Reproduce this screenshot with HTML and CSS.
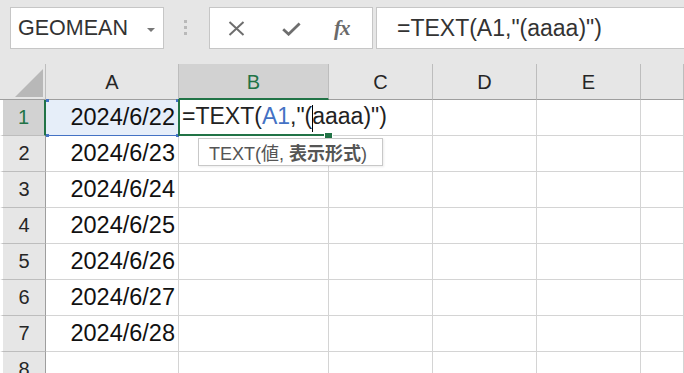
FILE: index.html
```html
<!DOCTYPE html>
<html>
<head lang="ja">
    <meta charset="UTF-8">
    <title>TEXT関数</title>
    <link rel="stylesheet" href="styles.css">
</head>
<body>
<div class="app">
    <div class="toolbar">
        <div class="namebox">
            <span class="name">GEOMEAN</span>
            <span class="drop"></span>
        </div>
        <div class="grip"><i></i><i></i><i></i></div>
        <div class="fbtns">
            <svg class="ic-x" width="17" height="15" viewBox="0 0 17 15">
                <path d="M1.5 1 L15.5 14 M15.5 1 L1.5 14" stroke="#6e6e6e" stroke-width="2" fill="none"/>
            </svg>
            <svg class="ic-ok" width="19" height="14" viewBox="0 0 19 14">
                <path d="M1.2 7.2 L6.6 12.2 L17.6 1.4" stroke="#6e6e6e" stroke-width="2.8" fill="none"/>
            </svg>
            <span class="fx">fx</span>
        </div>
        <div class="formula">=TEXT(A1,"(aaaa)")</div>
    </div>

    <div class="sheet">
        <div class="corner"><span class="tri"></span></div>
        <div class="colhead">A</div>
        <div class="colhead on">B</div>
        <div class="colhead">C</div>
        <div class="colhead">D</div>
        <div class="colhead">E</div>
        <div class="colhead"></div>

        <div class="rowhead on">1</div>
        <div class="cell date ref">2024/6/22<i class="h h1"></i><i class="h h2"></i><i class="h h3"></i><i class="h h4"></i></div>
        <div class="cell edit"><span class="etext">=TEXT(<span class="ref-a">A1</span>,"(<span class="caret"></span>aaaa)")</span></div>
        <div class="cell"></div><div class="cell"></div><div class="cell"></div><div class="cell"></div>

        <div class="rowhead">2</div>
        <div class="cell date">2024/6/23</div>
        <div class="cell"></div><div class="cell"></div><div class="cell"></div><div class="cell"></div><div class="cell"></div>

        <div class="rowhead">3</div>
        <div class="cell date">2024/6/24</div>
        <div class="cell"></div><div class="cell"></div><div class="cell"></div><div class="cell"></div><div class="cell"></div>

        <div class="rowhead">4</div>
        <div class="cell date">2024/6/25</div>
        <div class="cell"></div><div class="cell"></div><div class="cell"></div><div class="cell"></div><div class="cell"></div>

        <div class="rowhead">5</div>
        <div class="cell date">2024/6/26</div>
        <div class="cell"></div><div class="cell"></div><div class="cell"></div><div class="cell"></div><div class="cell"></div>

        <div class="rowhead">6</div>
        <div class="cell date">2024/6/27</div>
        <div class="cell"></div><div class="cell"></div><div class="cell"></div><div class="cell"></div><div class="cell"></div>

        <div class="rowhead">7</div>
        <div class="cell date">2024/6/28</div>
        <div class="cell"></div><div class="cell"></div><div class="cell"></div><div class="cell"></div><div class="cell"></div>

        <div class="rowhead">8</div>
        <div class="cell"></div><div class="cell"></div><div class="cell"></div><div class="cell"></div><div class="cell"></div><div class="cell"></div>

        <div class="tip">TEXT(値, <b>表示形式</b>)</div>
    </div>
</div>
</body>
</html>
```

FILE: styles.css
```css
* {
    margin: 0;
    padding: 0;
    box-sizing: border-box;
}

body {
    width: 684px;
    height: 373px;
    overflow: hidden;
    background: #fff;
    font-family: "Liberation Sans", "Noto Sans CJK JP", sans-serif;
    color: #222;
}

.app {
    width: 684px;
}

/* 上部の名前ボックスと数式バー */
.toolbar {
    height: 64px;
    background: #e6e6e6;
    display: flex;
    align-items: flex-start;
    padding-top: 7px;
}

.namebox {
    margin-left: 10px;
    width: 154px;
    height: 42px;
    background: #fff;
    border: 1px solid #c6c6c6;
    display: flex;
    align-items: center;
    padding-left: 7px;
}

.namebox .name {
    font-size: 21.5px;
    color: #333;
    flex: 1;
}

.namebox .drop {
    width: 0;
    height: 0;
    border-left: 4px solid transparent;
    border-right: 4px solid transparent;
    border-top: 4px solid #777;
    margin-right: 8px;
    margin-top: 3px;
}

.grip {
    margin-left: 20px;
    margin-top: 13px;
    display: flex;
    flex-direction: column;
    gap: 3px;
}

.grip i {
    display: block;
    width: 3px;
    height: 3px;
    background: #b9b9b9;
}

.fbtns {
    margin-left: 22px;
    width: 164px;
    height: 42px;
    background: #fff;
    border: 1px solid #c6c6c6;
    display: flex;
    align-items: center;
    padding-left: 18px;
}

.ic-x {
    margin-top: 1px;
}

.ic-ok {
    margin-left: 37px;
    margin-top: 1px;
}

.fx {
    margin-left: 33px;
    font-family: "Liberation Serif", serif;
    font-style: italic;
    font-weight: bold;
    font-size: 21px;
    color: #6a6a6a;
    letter-spacing: -1px;
}

.formula {
    margin-left: 3px;
    flex: 1;
    height: 42px;
    background: #fff;
    border: 1px solid #c6c6c6;
    border-right: none;
    padding-left: 20px;
    font-size: 23px;
    line-height: 40px;
    color: #333;
    white-space: nowrap;
}

/* シート */
.sheet {
    position: relative;
    display: grid;
    grid-template-columns: 46px 133px 150px 104px 104px 104px 1fr;
    grid-auto-rows: 36px;
}

.corner {
    background: #e6e6e6;
    border-right: 1px solid #bdbdbd;
    border-bottom: 1px solid #9e9e9e;
    display: flex;
    align-items: flex-end;
    justify-content: flex-end;
    padding: 0 2px 2px 0;
}

.corner .tri {
    width: 0;
    height: 0;
    border-left: 28px solid transparent;
    border-bottom: 28px solid #b8b8b8;
}

.colhead {
    background: #e6e6e6;
    border-right: 1px solid #bdbdbd;
    border-bottom: 1px solid #9e9e9e;
    display: flex;
    align-items: center;
    justify-content: center;
    font-size: 20px;
    color: #262626;
    padding-top: 1px;
}

.colhead.on {
    background: #d2d2d2;
    color: #217346;
    border-bottom: 2px solid #217346;
    padding-top: 2px;
}

.rowhead {
    background: #e6e6e6;
    border-left: 3px solid #fff;
    border-right: 1px solid #9e9e9e;
    border-bottom: 1px solid #bdbdbd;
    display: flex;
    align-items: center;
    justify-content: center;
    font-size: 20px;
    color: #262626;
}

.rowhead.on {
    background: #d2d2d2;
    color: #217346;
    border-right: 2px solid #217346;
}

.cell {
    border-right: 1px solid #d4d4d4;
    border-bottom: 1px solid #d4d4d4;
    display: flex;
    align-items: center;
    white-space: nowrap;
}

.cell.date {
    justify-content: flex-end;
    padding-right: 3px;
    font-size: 23.5px;
    color: #111;
}

/* 参照セル A1 */
.cell.ref {
    position: relative;
    background: #e6eef9;
    border-right-color: #4472c4;
    border-bottom-color: #4472c4;
}

.h {
    position: absolute;
    width: 3px;
    height: 3px;
    background: #4472c4;
}

.h1 { left: 0; top: -1px; }
.h2 { right: -1px; top: -1px; }
.h3 { left: 0; bottom: -2px; }
.h4 { right: -1px; bottom: -2px; }

/* 編集中のセル B1 */
.cell.edit {
    position: relative;
    z-index: 2;
    border-right-color: transparent;
    padding-left: 3px;
    font-size: 23px;
    color: #222;
    overflow: visible;
}

.cell.edit .etext {
    flex-shrink: 0;
}

.cell.edit::before {
    content: "";
    position: absolute;
    left: -1px;
    top: -1px;
    bottom: -1px;
    width: 145px;
    border-left: 2px solid #217346;
    border-bottom: 2px solid #217346;
}

.cell.edit::after {
    content: "";
    position: absolute;
    left: 145px;
    top: 32px;
    width: 7px;
    height: 7px;
    background: #217346;
    border: 1px solid #fff;
}

.ref-a {
    color: #4472c4;
}

.caret {
    display: inline-block;
    width: 1px;
    height: 27px;
    background: #000;
    margin-right: -1px;
    vertical-align: middle;
}

.tip {
    position: absolute;
    left: 198px;
    top: 74px;
    width: 185px;
    height: 28px;
    background: #fff;
    border: 1px solid #c8c8c8;
    box-shadow: 1px 1px 2px rgba(0, 0, 0, 0.08);
    z-index: 3;
    padding-left: 10px;
    font-size: 18px;
    line-height: 26px;
    color: #555;
    white-space: nowrap;
}

.tip b {
    font-family: "Noto Sans CJK JP", sans-serif;
    font-weight: bold;
}
```
